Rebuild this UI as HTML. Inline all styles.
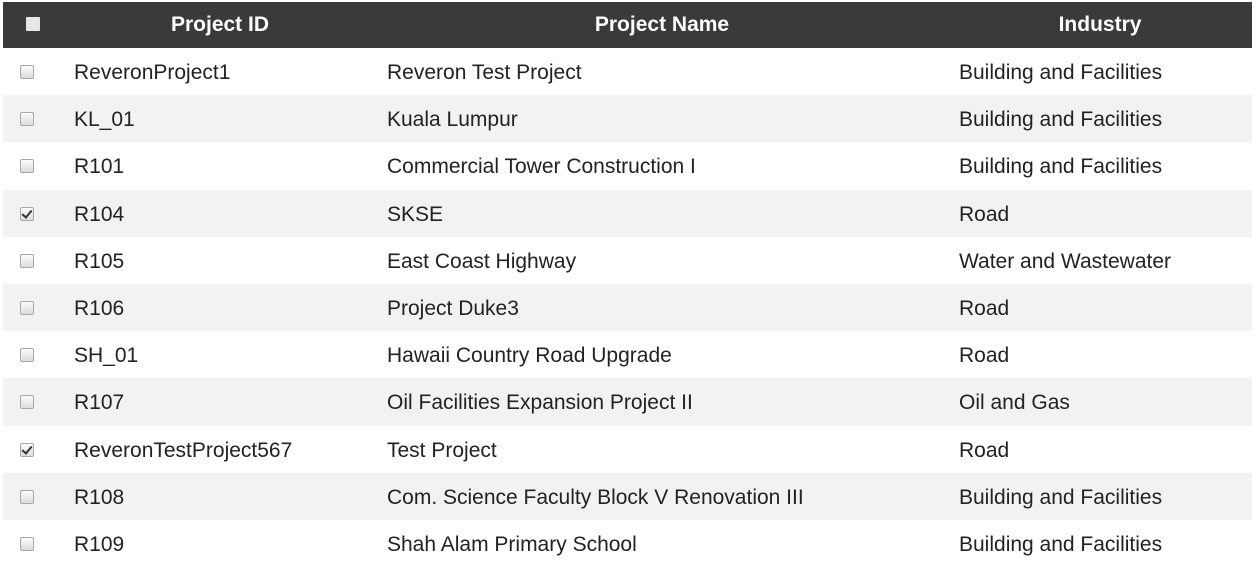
<!DOCTYPE html>
<html><head><style>
body{margin:0;background:#fff;width:1256px;height:567px;overflow:hidden;font-family:"Liberation Sans",Arial,sans-serif;}
.hdr{position:absolute;left:3px;top:2px;width:1249px;height:46px;background:#3a3a3a;}
.hdr span{position:absolute;top:11px;color:#fff;font-weight:bold;font-size:21px;transform:translateX(-50%);white-space:nowrap}
.row{position:absolute;left:3px;width:1249px;height:47.2px;}
.row.alt{background:#f2f2f2}
.row span{position:absolute;top:13px;font-size:21px;color:#222;white-space:nowrap}
.cb{position:absolute;left:17px;top:17px;width:12px;height:12px;border:1px solid #a8a8a8;border-radius:2px;background:linear-gradient(#fbfbfb,#dcdcdc);}
.cb.on::after{content:"";position:absolute;left:3px;top:0px;width:4px;height:8px;border:solid #333;border-width:0 2px 2px 0;transform:rotate(40deg);}
.hcb{position:absolute;left:23px;top:15px;width:14px;height:14px;background:#e6e6e6;border-radius:1px}
</style></head><body>
<div class="hdr"><div class="hcb"></div><span style="left:217px">Project ID</span><span style="left:659px">Project Name</span><span style="left:1097px">Industry</span></div>
<div class="row" style="top:48px"><div class="cb"></div><span style="left:71px">ReveronProject1</span><span style="left:384px">Reveron Test Project</span><span style="left:956px">Building and Facilities</span></div>
<div class="row alt" style="top:95.2px"><div class="cb"></div><span style="left:71px">KL_01</span><span style="left:384px">Kuala Lumpur</span><span style="left:956px">Building and Facilities</span></div>
<div class="row" style="top:142.4px"><div class="cb"></div><span style="left:71px">R101</span><span style="left:384px">Commercial Tower Construction I</span><span style="left:956px">Building and Facilities</span></div>
<div class="row alt" style="top:189.6px"><div class="cb on"></div><span style="left:71px">R104</span><span style="left:384px">SKSE</span><span style="left:956px">Road</span></div>
<div class="row" style="top:236.8px"><div class="cb"></div><span style="left:71px">R105</span><span style="left:384px">East Coast Highway</span><span style="left:956px">Water and Wastewater</span></div>
<div class="row alt" style="top:284px"><div class="cb"></div><span style="left:71px">R106</span><span style="left:384px">Project Duke3</span><span style="left:956px">Road</span></div>
<div class="row" style="top:331.2px"><div class="cb"></div><span style="left:71px">SH_01</span><span style="left:384px">Hawaii Country Road Upgrade</span><span style="left:956px">Road</span></div>
<div class="row alt" style="top:378.4px"><div class="cb"></div><span style="left:71px">R107</span><span style="left:384px">Oil Facilities Expansion Project II</span><span style="left:956px">Oil and Gas</span></div>
<div class="row" style="top:425.6px"><div class="cb on"></div><span style="left:71px">ReveronTestProject567</span><span style="left:384px">Test Project</span><span style="left:956px">Road</span></div>
<div class="row alt" style="top:472.8px"><div class="cb"></div><span style="left:71px">R108</span><span style="left:384px">Com. Science Faculty Block V Renovation III</span><span style="left:956px">Building and Facilities</span></div>
<div class="row" style="top:520px"><div class="cb"></div><span style="left:71px">R109</span><span style="left:384px">Shah Alam Primary School</span><span style="left:956px">Building and Facilities</span></div>
</body></html>
